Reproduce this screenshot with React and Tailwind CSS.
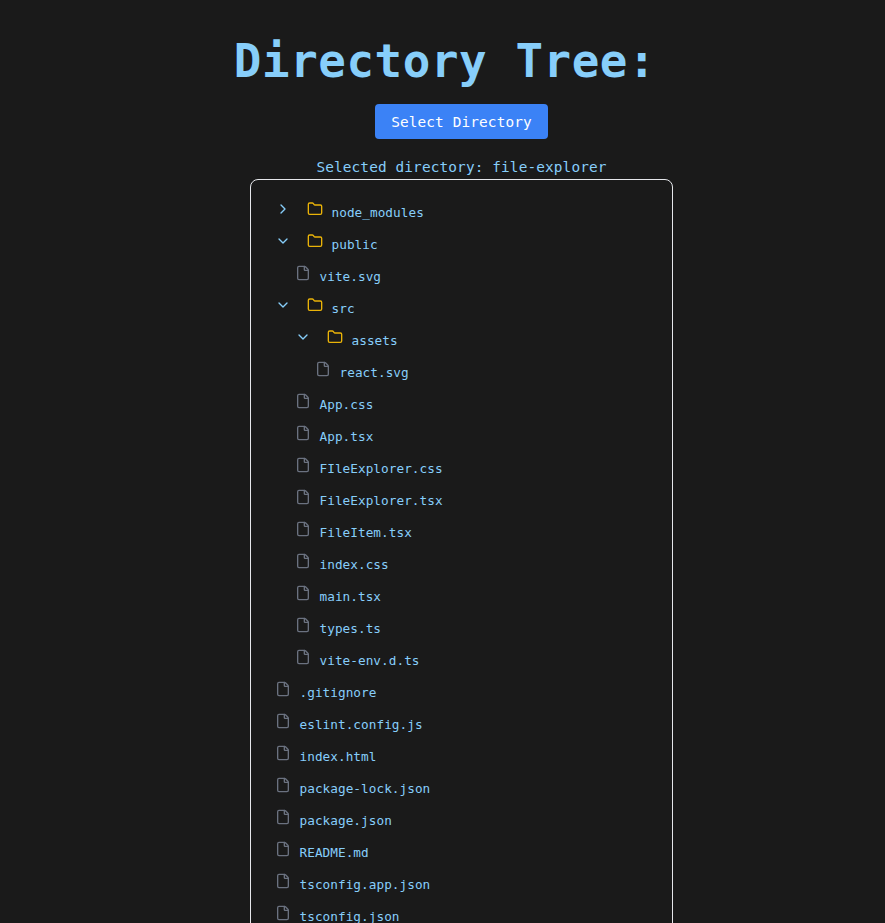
import { ChevronDown, ChevronRight, File, Folder } from "lucide-react";

const tree = [
  { name: "node_modules", kind: "closed", depth: 0 },
  { name: "public", kind: "open", depth: 0 },
  { name: "vite.svg", kind: "file", depth: 1 },
  { name: "src", kind: "open", depth: 0 },
  { name: "assets", kind: "open", depth: 1 },
  { name: "react.svg", kind: "file", depth: 2 },
  { name: "App.css", kind: "file", depth: 1 },
  { name: "App.tsx", kind: "file", depth: 1 },
  { name: "FIleExplorer.css", kind: "file", depth: 1 },
  { name: "FileExplorer.tsx", kind: "file", depth: 1 },
  { name: "FileItem.tsx", kind: "file", depth: 1 },
  { name: "index.css", kind: "file", depth: 1 },
  { name: "main.tsx", kind: "file", depth: 1 },
  { name: "types.ts", kind: "file", depth: 1 },
  { name: "vite-env.d.ts", kind: "file", depth: 1 },
  { name: ".gitignore", kind: "file", depth: 0 },
  { name: "eslint.config.js", kind: "file", depth: 0 },
  { name: "index.html", kind: "file", depth: 0 },
  { name: "package-lock.json", kind: "file", depth: 0 },
  { name: "package.json", kind: "file", depth: 0 },
  { name: "README.md", kind: "file", depth: 0 },
  { name: "tsconfig.app.json", kind: "file", depth: 0 },
  { name: "tsconfig.json", kind: "file", depth: 0 },
];

const indents = ["pl-0", "pl-5", "pl-10"];

function Row({ item }) {
  const Chevron = item.kind === "closed" ? ChevronRight : ChevronDown;
  return (
    <li className={`flex h-8 ${indents[item.depth]}`}>
      {item.kind === "file" ? (
        <File className="mr-[8.5px] mt-[5px] size-4 text-[#6b7280]" />
      ) : (
        <>
          <Chevron className="mr-4 mt-[5px] size-4" />
          <Folder className="mr-[8.5px] mt-[5px] size-4 text-[#eab308]" />
        </>
      )}
      <span className="pt-[7px] text-[12.7px] leading-5 tracking-[0.055px]">{item.name}</span>
    </li>
  );
}

export default function App() {
  return (
    <div className="h-screen overflow-hidden bg-[#1a1a1a] font-['DejaVu_Sans_Mono',monospace] text-[#87cefa]">
      <main className="ml-[38px] flex w-[847px] flex-col items-center pt-8">
        <h1 className="-ml-[33px] h-[72px] whitespace-nowrap pt-px text-[45.8px] font-bold leading-[56px] tracking-[0.58px]">
          Directory Tree:
        </h1>
        <button className="h-[35px] w-[173px] rounded bg-[#3b82f6] pt-[2px] text-[14.4px] tracking-[0.13px] text-white">
          Select Directory
        </button>
        <p className="mt-4 h-6 text-[14.4px] leading-6 tracking-[0.13px]">Selected directory: file-explorer</p>
        <ul className="h-[800px] w-[423px] rounded-lg border border-gray-200 pl-6 pt-4">
          {tree.map((item) => (
            <Row key={item.name} item={item} />
          ))}
        </ul>
      </main>
    </div>
  );
}
